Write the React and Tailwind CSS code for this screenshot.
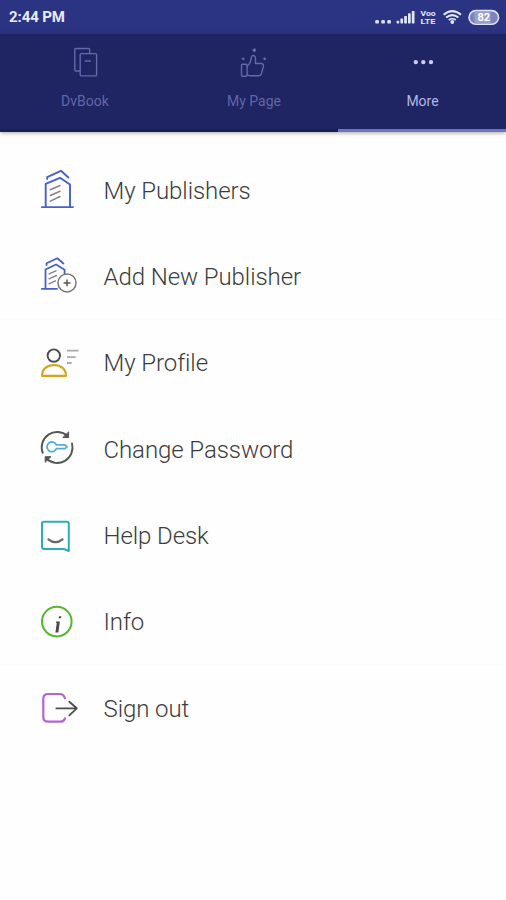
const stroke = { fill: "none", strokeLinecap: "round", strokeLinejoin: "round" };

function PublishersIcon() {
  return (
    <svg width="48" height="44" viewBox="36 168.5 48 44" {...stroke} strokeWidth="1.9">
      <g stroke="#4661c9">
        <path d="M41.8 207.6H73M45.7 207V184.4L60 178.3L70 185V207" />
        <path d="M47.2 179.6V177.6L61 171.3L68.3 178" />
      </g>
      <path d="M50.3 190.2L60 186M50.3 196L60 191.7M50.3 201.7L60 197" stroke="#858585" strokeWidth="1.5" />
    </svg>
  );
}

function AddPublisherIcon() {
  return (
    <svg width="48" height="44" viewBox="36 254.5 48 44" {...stroke} strokeWidth="1.8">
      <g stroke="#4661c9">
        <path d="M41.8 289.3H57M45.5 289V270L56 265L64.6 270.3V274" />
        <path d="M46.6 265.6V263.8L57.3 258.8L63.4 264" />
      </g>
      <path d="M49 274.3L56 271.3M49 279.3L56.5 276M49 284.3L55.5 281.3" stroke="#858585" strokeWidth="1.4" />
      <circle cx="67" cy="283.4" r="9" stroke="#777" strokeWidth="1.5" fill="#fff" />
      <path d="M67 280.5V286.3M64.1 283.4H69.9" stroke="#555" strokeWidth="1.5" />
    </svg>
  );
}

function ProfileIcon() {
  return (
    <svg width="48" height="44" viewBox="36 341 48 44" {...stroke}>
      <circle cx="53.8" cy="355.6" r="6.2" stroke="#4b4b4f" strokeWidth="1.9" />
      <path d="M42 375.9C42 369 47 365 54 365S66 369 66 375.9Z" stroke="#d5a51f" strokeWidth="2.1" />
      <path d="M67 350.7H78.6M67 357.1H75.6M67 363H71.6" stroke="#aaa" strokeWidth="1.8" strokeLinecap="butt" />
    </svg>
  );
}

function PasswordIcon() {
  return (
    <svg width="48" height="44" viewBox="36 427.5 48 44" {...stroke}>
      <g stroke="#555" strokeWidth="1.9">
        <path d="M42.7 453.3A15.4 15.4 0 0 1 67.5 436.5" />
        <path d="M72 444A15.4 15.4 0 0 1 46.3 459" />
      </g>
      <g stroke="#555" strokeWidth="1" fill="#555">
        <path d="M68.6 432.8V438H63.2Z" />
        <path d="M45.2 462.4V457.2H50.6Z" />
      </g>
      <path d="M56.4 445.4H65L67 447.4L65 449.2H56.4A4.9 4.9 0 1 1 56.4 445.4Z" stroke="#51afd7" strokeWidth="1.8" />
    </svg>
  );
}

function HelpIcon() {
  return (
    <svg width="48" height="44" viewBox="36 514 48 44" {...stroke}>
      <path d="M44 521.8H66.8Q68.8 521.8 68.8 523.8V551L64 549H44Q42 549 42 547V523.8Q42 521.8 44 521.8Z" stroke="#2aaeb0" strokeWidth="2" />
      <path d="M48.5 539.3Q55.5 545 62.5 539.3" stroke="#666" strokeWidth="2.2" />
    </svg>
  );
}

function InfoIcon() {
  return (
    <svg width="48" height="44" viewBox="36 600 48 44" {...stroke}>
      <circle cx="56.8" cy="621.6" r="14.8" stroke="#52b82c" strokeWidth="2" />
      <path d="M56.2 621.6H59.8L58.4 632.6H55.4L56.8 623H56Z" fill="#4b474c" />
      <path d="M58.6 618.3L59.1 616.2H61.4L60.9 618.3Z" fill="#4b474c" />
    </svg>
  );
}

function SignOutIcon() {
  return (
    <svg width="48" height="44" viewBox="36 687 48 44" {...stroke}>
      <path d="M65 698.3C64 695.5 62.5 694 60 694H48Q43.3 694 43.3 698.7V717Q43.3 721.7 48 721.7H60C62.5 721.7 64 721 65 718.5" stroke="#b267cf" strokeWidth="2.2" />
      <path d="M56.3 708.3H76.6M69.3 701.7L76.8 708.3L69.3 715.3" stroke="#4e4e4e" strokeWidth="1.8" />
    </svg>
  );
}

function BookIcon() {
  return (
    <svg width="30" height="30" viewBox="70 47 30 30" {...stroke} stroke="#6468ad" strokeWidth="1.4">
      <path d="M79.5 71H76Q74.8 71 74.8 69.8V49.7Q74.8 48.5 76 48.5H88.5Q89.7 48.5 89.7 49.7V53" />
      <rect x="80.2" y="53.6" width="16.4" height="22.3" rx="1.2" />
      <path d="M85.3 61H90.3" strokeWidth="1.6" />
    </svg>
  );
}

function ThumbIcon() {
  return (
    <svg width="30" height="30" viewBox="239 47.5 30 30" {...stroke} stroke="#6468ad" strokeWidth="1.4">
      <rect x="241.5" y="64.8" width="5.6" height="12" rx="1.2" />
      <path d="M247.2 66.5C250.5 64.5 251 61.5 251.2 58C251.5 55.2 255.5 55.2 255.5 59V64H261.2C263.3 64 263.8 65.5 263.3 67.4L261.3 74.5C260.8 76 260 76.3 258.5 76.3H250C248.5 76.3 248.3 75.5 247.2 75.3" />
      <path d="M254.4 49.2L256 50.8L254.4 52.4L252.8 50.8ZM243.3 58.4L244.4 59.5L243.3 60.6L242.2 59.5ZM264.8 58.4L265.9 59.5L264.8 60.6L263.7 59.5Z" fill="#7a7fbe" strokeWidth="1" />
    </svg>
  );
}

function DotsIcon() {
  return (
    <svg width="30" height="30" viewBox="407.5 47.5 30 30" fill="#c9cdf2">
      <circle cx="415.3" cy="62.6" r="2.2" />
      <circle cx="422.8" cy="62.6" r="2.2" />
      <circle cx="430.5" cy="62.6" r="2.2" />
    </svg>
  );
}

function StatusIcons() {
  return (
    <svg width="132" height="34" viewBox="374 0 132 34">
      <g fill="#e3e7fb">
        <rect x="375.3" y="20" width="3.6" height="3.6" rx="1.2" />
        <rect x="381.3" y="20" width="3.6" height="3.6" rx="1.2" />
        <rect x="387.3" y="20" width="3.6" height="3.6" rx="1.2" />
        <rect x="396.6" y="20.8" width="2.6" height="2.6" rx=".6" />
        <rect x="400.4" y="18.4" width="2.7" height="5" rx=".6" />
        <rect x="404.2" y="16" width="2.7" height="7.4" rx=".6" />
        <rect x="408" y="13.3" width="2.7" height="10.1" rx=".6" />
        <rect x="411.8" y="11" width="2.7" height="12.4" rx=".6" />
        <g fontFamily="Roboto, sans-serif" fontWeight="700">
          <text x="420.6" y="16" fontSize="7.2" textLength="15" lengthAdjust="spacingAndGlyphs">Voo</text>
          <text x="420.6" y="24.4" fontSize="8" textLength="15" lengthAdjust="spacingAndGlyphs">LTE</text>
        </g>
        <circle cx="452.3" cy="22" r="1.9" />
      </g>
      <g fill="none" stroke="#e3e7fb" strokeWidth="2">
        <path d="M443.6 14.8Q452.3 7.4 461 14.8" />
        <path d="M446.2 17.6Q452.3 12.6 458.4 17.6" />
        <path d="M448.8 20Q452.3 17.4 455.8 20" strokeWidth="1.6" />
      </g>
      <rect x="469" y="10.6" width="29.6" height="13.6" rx="6.8" fill="#7c83bf" stroke="#dfe3fa" strokeWidth="1.6" />
      <rect x="474.5" y="11.4" width="16" height="12" fill="#9aa0d2" />
      <text x="483.8" y="21.2" fontSize="11" fontWeight="700" textAnchor="middle" fill="#fff" fontFamily="Roboto, sans-serif">82</text>
    </svg>
  );
}

const tabs = [
  { label: "DvBook", Icon: BookIcon, active: false },
  { label: "My Page", Icon: ThumbIcon, active: false },
  { label: "More", Icon: DotsIcon, active: true },
];

const items = [
  { label: "My Publishers", Icon: PublishersIcon },
  { label: "Add New Publisher", Icon: AddPublisherIcon, divider: true },
  { label: "My Profile", Icon: ProfileIcon },
  { label: "Change Password", Icon: PasswordIcon },
  { label: "Help Desk", Icon: HelpIcon },
  { label: "Info", Icon: InfoIcon, divider: true },
  { label: "Sign out", Icon: SignOutIcon },
];

export default function App() {
  return (
    <div className="flex h-[900px] w-[506px] flex-col overflow-hidden bg-[#fefefe] font-['Roboto',sans-serif]">
      <div className="flex h-[34px] shrink-0 items-center justify-between bg-[#2b3483] pl-[9px]">
        <span className="pt-px text-[15px] font-bold tracking-[-0.1px] text-[#e8ecff]">2:44 PM</span>
        <StatusIcons />
      </div>
      <nav className="grid h-[98px] shrink-0 grid-cols-[169px_169px_168px] bg-[#1f2463] shadow-[0_1px_4px_rgba(0,0,0,0.35)]">
        {tabs.map(({ label, Icon, active }) => (
          <div
            key={label}
            className={
              active
                ? "flex flex-col items-center border-b-[3px] border-[#6d75bf] pt-[13px] pl-px text-[#b3b7e4]"
                : "flex flex-col items-center border-b-[3px] border-[#1b1d55] pt-[13px] pl-px text-[#6266a8]"
            }
          >
            <Icon />
            <span className="mt-[14px] text-[14px] leading-5">{label}</span>
          </div>
        ))}
      </nav>
      <ul className="flex flex-col pt-[15px]">
        {items.map(({ label, Icon, divider }) => (
          <li
            key={label}
            className={
              divider
                ? "flex h-[86.4px] items-center border-b border-[#fbfbfb] pl-9"
                : "flex h-[86.4px] items-center pl-9"
            }
          >
            <Icon />
            <span className="pt-px pl-[19.5px] text-[24px] font-light leading-8 tracking-[-0.08px] text-[#3c3c3c]">{label}</span>
          </li>
        ))}
      </ul>
    </div>
  );
}
